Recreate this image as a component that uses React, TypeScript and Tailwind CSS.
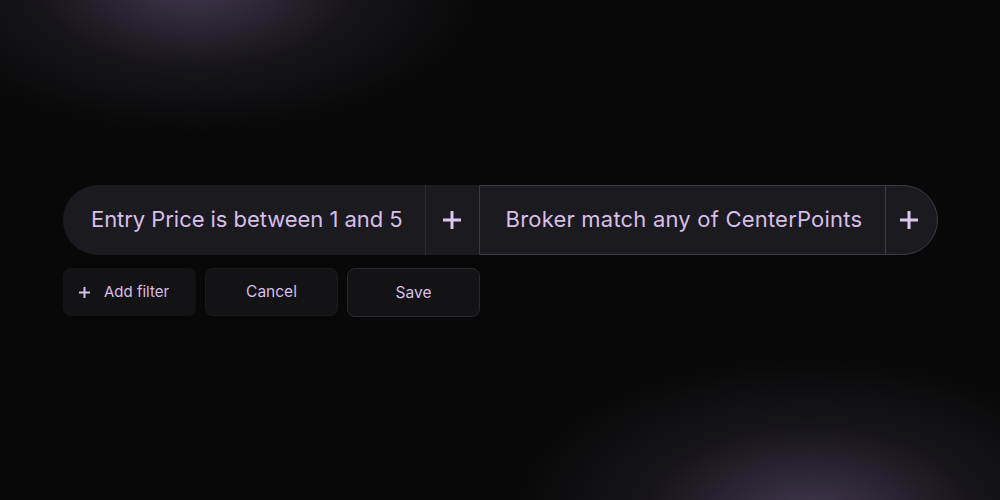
const filters = ["Entry Price is between 1 and 5", "Broker match any of CenterPoints"];

const PlusMark = ({ size, stroke }: { size: number; stroke: number }) => (
  <svg width={size} height={size} viewBox={`0 0 ${size} ${size}`} fill="none">
    <path
      d={`M${size / 2} 0V${size}M0 ${size / 2}H${size}`}
      stroke="currentColor"
      strokeWidth={stroke}
    />
  </svg>
);

const App = () => {
  return (
    <div
      className="relative w-[1000px] h-[500px] overflow-hidden bg-[#080808] font-['Inter',sans-serif]"
      style={{
        backgroundImage:
          "radial-gradient(ellipse 290px 150px at 195px -15px, rgba(68,58,82,0.95), rgba(34,31,40,0.55) 55%, transparent 100%), radial-gradient(ellipse 300px 160px at 810px 515px, rgba(68,58,82,0.95), rgba(34,31,40,0.55) 55%, transparent 100%)",
      }}
    >
      <div className="pt-[185px] pl-[63px] flex flex-col gap-[13px]">
        {/* filter pill */}
        <div className="flex h-[70px] w-[875px]">
          <div className="flex items-stretch bg-[#1b1a1f] rounded-l-full">
            <span className="flex items-center pb-[2px] pl-[28px] pr-[22px] text-[22px] text-[#d6bfe8] tracking-[-0.05px] whitespace-nowrap">
              {filters[0]}
            </span>
            <button className="w-[54px] flex items-center justify-center border-l border-[#2c2a31] text-[#dcc6ee]">
              <PlusMark size={18} stroke={3} />
            </button>
          </div>
          <div className="flex flex-1 items-stretch bg-[#1b1a1f] rounded-r-full border border-[#3d3a45]">
            <span className="flex flex-1 items-center pb-[2px] pl-[26px] text-[22px] text-[#d6bfe8] tracking-[0.2px] whitespace-nowrap">
              {filters[1]}
            </span>
            <button className="w-[52px] flex items-center justify-center border-l border-[#3d3a45] text-[#dcc6ee] pr-[5px]">
              <PlusMark size={18} stroke={3} />
            </button>
          </div>
        </div>

        {/* actions */}
        <div className="flex gap-[9px]">
          <button className="w-[133px] h-[48px] flex items-center gap-[14px] pl-[16px] rounded-lg bg-[#131215] text-[15px] text-[#d6bfe8]">
            <PlusMark size={11} stroke={2} />
            Add filter
          </button>
          <button className="w-[133px] h-[48px] flex items-center justify-center rounded-lg bg-[#131215] border border-[#1c1b1f] text-[15.5px] text-[#d6bfe8]">
            Cancel
          </button>
          <button className="w-[133px] h-[49px] flex items-center justify-center rounded-lg bg-[#131215] border border-[#2a282e] text-[15.5px] text-[#d6bfe8]">
            Save
          </button>
        </div>
      </div>
    </div>
  );
};

export default App;
